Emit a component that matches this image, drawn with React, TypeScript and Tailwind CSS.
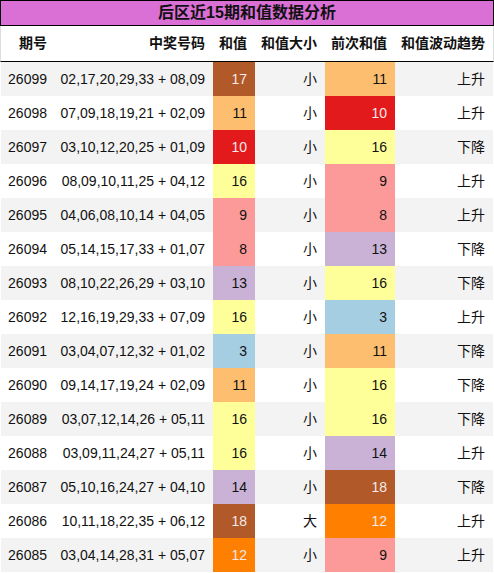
import React from "react";

type Row = [string, string, number, string, number, string];

const rows: Row[] = [
  ["26099", "02,17,20,29,33 + 08,09", 17, "小", 11, "上升"],
  ["26098", "07,09,18,19,21 + 02,09", 11, "小", 10, "上升"],
  ["26097", "03,10,12,20,25 + 01,09", 10, "小", 16, "下降"],
  ["26096", "08,09,10,11,25 + 04,12", 16, "小", 9, "上升"],
  ["26095", "04,06,08,10,14 + 04,05", 9, "小", 8, "上升"],
  ["26094", "05,14,15,17,33 + 01,07", 8, "小", 13, "下降"],
  ["26093", "08,10,22,26,29 + 03,10", 13, "小", 16, "下降"],
  ["26092", "12,16,19,29,33 + 07,09", 16, "小", 3, "上升"],
  ["26091", "03,04,07,12,32 + 01,02", 3, "小", 11, "下降"],
  ["26090", "09,14,17,19,24 + 02,09", 11, "小", 16, "下降"],
  ["26089", "03,07,12,14,26 + 05,11", 16, "小", 16, "下降"],
  ["26088", "03,09,11,24,27 + 05,11", 16, "小", 14, "上升"],
  ["26087", "05,10,16,24,27 + 04,10", 14, "小", 18, "下降"],
  ["26086", "10,11,18,22,35 + 06,12", 18, "大", 12, "上升"],
  ["26085", "03,04,14,28,31 + 05,07", 12, "小", 9, "上升"],
];

const cellColor = (v: number): string => {
  switch (v) {
    case 3:
      return "bg-[#a6cee3] text-[#111]";
    case 8:
    case 9:
      return "bg-[#fb9a99] text-[#111]";
    case 10:
      return "bg-[#e31a1c] text-[#f4eaea]";
    case 11:
      return "bg-[#fdbf6f] text-[#111]";
    case 12:
      return "bg-[#ff7f00] text-[#f4eaea]";
    case 13:
    case 14:
      return "bg-[#cab2d6] text-[#111]";
    case 16:
      return "bg-[#ffff99] text-[#111]";
    case 17:
    case 18:
      return "bg-[#b15928] text-[#f4eaea]";
    default:
      return "";
  }
};

const cjk = "font-['Liberation_Sans','Noto_Sans_CJK_SC',sans-serif]";

export default function App() {
  return (
    <div className={`w-[494px] h-[573px] bg-white ${cjk} text-[14px] text-[#111]`}>
      <div className="h-[26px] border border-black bg-[#da70d6] flex items-center justify-center text-[16px] font-bold leading-none text-[#111]">
        后区近15期和值数据分析
      </div>
      <div className="h-[36px] border-b border-black border-x border-x-[#dddddd] grid grid-cols-[54px_158px_42px_70px_70px_98px] items-center font-bold">
        <div className="text-right pr-[8px]">期号</div>
        <div className="text-right pr-[8px]">中奖号码</div>
        <div className="text-right pr-[8px]">和值</div>
        <div className="text-right pr-[8px]">和值大小</div>
        <div className="text-right pr-[8px]">前次和值</div>
        <div className="text-right pr-[8px]">和值波动趋势</div>
      </div>
      <div className="px-[1px]">
        {rows.map((r, i) => (
          <div
            key={r[0]}
            className={`h-[34px] grid grid-cols-[54px_158px_42px_70px_70px_98px] ${
              i % 2 === 0 ? "bg-[#f3f3f3]" : "bg-white"
            }`}
          >
            <div className="flex items-center justify-end pr-[8px]">{r[0]}</div>
            <div className="flex items-center justify-end pr-[8px]">{r[1]}</div>
            <div className={`flex items-center justify-end pr-[8px] ${cellColor(r[2])}`}>{r[2]}</div>
            <div className="flex items-center justify-end pr-[8px]">{r[3]}</div>
            <div className={`flex items-center justify-end pr-[8px] ${cellColor(r[4])}`}>{r[4]}</div>
            <div className="flex items-center justify-end pr-[8px]">{r[5]}</div>
          </div>
        ))}
      </div>
    </div>
  );
}
